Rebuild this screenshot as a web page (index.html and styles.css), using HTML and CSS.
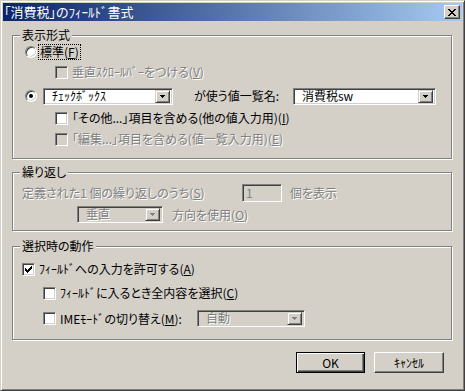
FILE: index.html
```html
<!DOCTYPE html>
<html lang="ja">
<head>
    <meta charset="UTF-8">
    <title>「消費税」のﾌｨｰﾙﾄﾞ書式</title>
    <link rel="stylesheet" href="styles.css">
</head>
<body>
<div class="window">
    <div class="titlebar">
        <span class="title">「消費税」のﾌｨｰﾙﾄﾞ書式</span>
        <span class="close-btn">
            <svg width="8" height="7" viewBox="0 0 8 7" shape-rendering="crispEdges"><path fill="#000" d="M0 0h2v1H0z M6 0h2v1H6z M1 1h2v1H1z M5 1h2v1H5z M2 2h4v1H2z M3 3h2v1H3z M2 4h4v1H2z M1 5h2v1H1z M5 5h2v1H5z M0 6h2v1H0z M6 6h2v1H6z"/></svg>
        </span>
    </div>

    <div class="dialog">
        <!-- 表示形式 -->
        <div class="group group-format">
            <div class="group-title">表示形式</div>
            <div class="row row-std">
                <span class="radio"></span>
                <span class="focus">標準(<u>F</u>)</span>
            </div>
            <div class="row row-scroll">
                <span class="check disabled-box"></span>
                <span class="disabled">垂直ｽｸﾛｰﾙﾊﾞｰをつける(<u>V</u>)</span>
            </div>
            <div class="row row-list">
                <span class="radio checked"></span>
                <span class="combo combo-type">
                    <span class="combo-text">ﾁｪｯｸﾎﾞｯｸｽ</span>
                    <span class="combo-btn"><svg width="5" height="3" viewBox="0 0 5 3" shape-rendering="crispEdges"><path fill="#000" d="M0 0h5v1H0z M1 1h3v1H1z M2 2h1v1H2z"/></svg></span>
                </span>
                <span class="list-label">が使う値一覧名:</span>
                <span class="combo combo-list">
                    <span class="combo-text">消費税sw</span>
                    <span class="combo-btn"><svg width="5" height="3" viewBox="0 0 5 3" shape-rendering="crispEdges"><path fill="#000" d="M0 0h5v1H0z M1 1h3v1H1z M2 2h1v1H2z"/></svg></span>
                </span>
            </div>
            <div class="row row-other">
                <span class="check"></span>
                <span>「その他...」項目を含める(他の値入力用)(<u>I</u>)</span>
            </div>
            <div class="row row-edit">
                <span class="check disabled-box"></span>
                <span class="disabled">「編集...」項目を含める(値一覧入力用)(<u>E</u>)</span>
            </div>
        </div>

        <!-- 繰り返し -->
        <div class="group group-repeat">
            <div class="group-title">繰り返し</div>
            <div class="row row-count">
                <span class="disabled count-label">定義された1 個の繰り返しのうち(<u>S</u>)</span>
                <span class="field">1</span>
                <span class="disabled">個を表示</span>
            </div>
            <div class="row row-dir">
                <span class="combo combo-dir combo-off">
                    <span class="combo-text">垂直</span>
                    <span class="combo-btn"><svg width="5" height="3" viewBox="0 0 5 3" shape-rendering="crispEdges"><path fill="#808080" d="M0 0h5v1H0z M1 1h3v1H1z M2 2h1v1H2z"/></svg></span>
                </span>
                <span class="disabled">方向を使用(<u>O</u>)</span>
            </div>
        </div>

        <!-- 選択時の動作 -->
        <div class="group group-select">
            <div class="group-title">選択時の動作</div>
            <div class="row row-allow">
                <span class="check">
                    <svg width="7" height="7" viewBox="0 0 7 7" shape-rendering="crispEdges"><path fill="#000" d="M0 2h1v3H0z M1 3h1v3H1z M2 4h1v3H2z M3 3h1v3H3z M4 2h1v3H4z M5 1h1v3H5z M6 0h1v3H6z"/></svg>
                </span>
                <span>ﾌｨｰﾙﾄﾞへの入力を許可する(<u>A</u>)</span>
            </div>
            <div class="row row-sub">
                <span class="check"></span>
                <span>ﾌｨｰﾙﾄﾞに入るとき全内容を選択(<u>C</u>)</span>
            </div>
            <div class="row row-ime">
                <span class="check"></span>
                <span class="ime-label">IMEﾓｰﾄﾞの切り替え(<u>M</u>):</span>
                <span class="combo combo-ime combo-off">
                    <span class="combo-text">自動</span>
                    <span class="combo-btn"><svg width="5" height="3" viewBox="0 0 5 3" shape-rendering="crispEdges"><path fill="#808080" d="M0 0h5v1H0z M1 1h3v1H1z M2 2h1v1H2z"/></svg></span>
                </span>
            </div>
        </div>

        <div class="buttons">
            <span class="btn btn-default">OK</span>
            <span class="btn">ｷｬﾝｾﾙ</span>
        </div>
    </div>
</div>
</body>
</html>
```

FILE: styles.css
```css
* {
    box-sizing: border-box;
}
body {
    margin: 0;
    background: #d4d0c8;
    font-family: "Noto Sans CJK JP", "Noto Sans", sans-serif;
    font-size: 12px;
    line-height: 14px;
    font-feature-settings: "palt";
    color: #000000;
}
u {
    text-decoration: underline;
    text-underline-offset: 1px;
}

/* window frame */
.window {
    width: 465px;
    height: 391px;
    padding: 2px;
    border: 1px solid;
    border-color: #d4d0c8 #404040 #404040 #d4d0c8;
    box-shadow: inset 1px 1px #ffffff, inset -1px -1px #808080;
    background: #d4d0c8;
}
.titlebar {
    height: 18px;
    display: flex;
    align-items: center;
    justify-content: space-between;
    padding: 0 2px 0 1px;
    background: linear-gradient(to right, #0a246a, #a6caf0);
}
.title {
    color: #ffffff;
    font-size: 13px;
}
.close-btn {
    width: 16px;
    height: 14px;
    display: flex;
    align-items: center;
    justify-content: center;
    background: #d4d0c8;
    border: 1px solid;
    border-color: #ffffff #404040 #404040 #ffffff;
    box-shadow: inset -1px -1px #808080;
}

.dialog {
    padding: 14px 10px 0 9px;
}

/* group boxes */
.group {
    border: 1px solid #808080;
    box-shadow: inset 1px 1px #ffffff, 1px 1px #ffffff;
}
.group-title {
    width: fit-content;
    margin: -8px 0 0 7px;
    padding: 0 2px;
    background: #d4d0c8;
}
.group-format {
    padding-bottom: 12px;
}
.group-repeat {
    margin-top: 13px;
    padding-bottom: 7px;
}
.group-select {
    margin-top: 15px;
    padding-bottom: 12px;
}

.row {
    display: flex;
    align-items: center;
    white-space: nowrap;
}
.row-std {
    height: 16px;
    margin: 2px 0 0 12px;
    gap: 1px;
}
.row-scroll {
    height: 14px;
    margin: 5px 0 0 42px;
    gap: 4px;
}
.row-list {
    height: 18px;
    margin: 8px 0 0 12px;
}
.row-other {
    height: 14px;
    margin: 6px 0 0 42px;
    gap: 4px;
}
.row-edit {
    height: 14px;
    margin: 7px 0 0 42px;
    gap: 4px;
}
.row-count {
    height: 18px;
    margin: 5px 0 0 9px;
    gap: 8px;
}
.row-dir {
    height: 17px;
    margin: 4px 0 0 64px;
    gap: 9px;
}
.row-allow {
    height: 14px;
    margin: 9px 0 0 9px;
    gap: 4px;
}
.row-sub {
    height: 14px;
    margin: 10px 0 0 30px;
    gap: 4px;
}
.row-ime {
    height: 17px;
    margin: 10px 0 0 30px;
    gap: 4px;
}

/* labels */
.disabled {
    color: #808080;
    text-shadow: 1px 1px 0 #ffffff;
}
.focus {
    border: 1px dotted #000000;
    padding: 0 1px;
    line-height: 14px;
}
.list-label {
    width: 99px;
    margin-left: 21px;
}
.count-label {
    width: 212px;
}
.ime-label {
    width: 133px;
}

/* radio & checkbox */
.radio {
    width: 12px;
    height: 12px;
    flex: none;
    border-radius: 50%;
    background: #ffffff;
    border: 1px solid;
    border-color: #808080 #ffffff #ffffff #808080;
    box-shadow: inset 1px 1px #404040, inset -1px -1px #d4d0c8;
    display: flex;
    align-items: center;
    justify-content: center;
}
.radio.checked::after {
    content: "";
    width: 4px;
    height: 4px;
    border-radius: 50%;
    background: #000000;
}
.check {
    width: 13px;
    height: 13px;
    flex: none;
    background: #ffffff;
    border: 1px solid;
    border-color: #808080 #ffffff #ffffff #808080;
    box-shadow: inset 1px 1px #404040, inset -1px -1px #d4d0c8;
    display: flex;
    align-items: center;
    justify-content: center;
}
.check.disabled-box {
    background: #d4d0c8;
}

/* combo boxes and fields */
.combo {
    height: 17px;
    display: flex;
    align-items: center;
    padding: 2px;
    background: #ffffff;
    border: 1px solid;
    border-color: #808080 #ffffff #ffffff #808080;
    box-shadow: inset 1px 1px #404040, inset -1px -1px #d4d0c8;
}
.combo-off {
    background: #d4d0c8;
}
.combo-off .combo-text {
    color: #808080;
    text-shadow: 1px 1px 0 #ffffff;
}
.combo-text {
    flex: 1;
    padding-left: 6px;
    margin-top: -1px;
}
.combo-btn {
    width: 15px;
    height: 13px;
    flex: none;
    display: flex;
    align-items: center;
    justify-content: center;
    background: #d4d0c8;
    border: 1px solid;
    border-color: #d4d0c8 #404040 #404040 #d4d0c8;
    box-shadow: inset 1px 1px #ffffff, inset -1px -1px #808080;
}
.combo-type {
    width: 130px;
    margin-left: 6px;
}
.combo-list {
    width: 143px;
}
.combo-dir {
    width: 86px;
}
.combo-ime {
    width: 108px;
}
.field {
    width: 40px;
    height: 18px;
    padding: 1px 3px;
    color: #808080;
    background: #d4d0c8;
    border: 1px solid;
    border-color: #808080 #ffffff #ffffff #808080;
    box-shadow: inset 1px 1px #404040, inset -1px -1px #d4d0c8;
}

/* buttons */
.buttons {
    display: flex;
    justify-content: flex-end;
    gap: 9px;
    margin-top: 12px;
    padding-right: 8px;
}
.btn {
    width: 70px;
    height: 21px;
    display: flex;
    align-items: center;
    justify-content: center;
    border: 1px solid;
    border-color: #ffffff #404040 #404040 #ffffff;
    box-shadow: inset -1px -1px #808080;
}
.btn-default {
    width: 69px;
    border-color: #000000;
    box-shadow: inset 1px 1px #ffffff, inset -1px -1px #404040, inset -2px -2px #808080;
}
```
